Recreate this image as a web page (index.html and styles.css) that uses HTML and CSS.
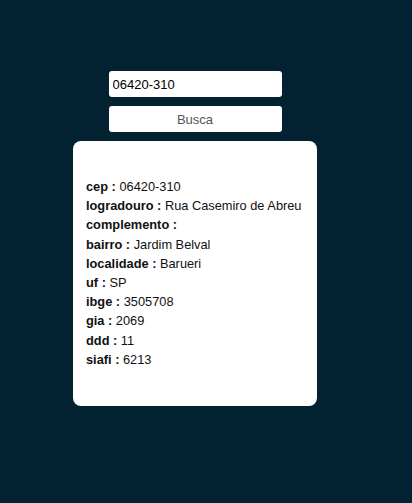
FILE: index.html
```html
<!DOCTYPE html>
<html lang="pt-BR">
<head>
<meta charset="utf-8">
<title>Busca CEP</title>
<link rel="stylesheet" href="styles.css">
</head>
<body>
<main class="app">
  <input class="cep-input" type="text" value="06420-310">
  <button class="busca-btn" type="button">Busca</button>
  <section class="card">
    <p class="row"><b>cep :</b> 06420-310</p>
    <p class="row"><b>logradouro :</b> Rua Casemiro de Abreu</p>
    <p class="row"><b>complemento :</b> </p>
    <p class="row"><b>bairro :</b> Jardim Belval</p>
    <p class="row"><b>localidade :</b> Barueri</p>
    <p class="row"><b>uf :</b> SP</p>
    <p class="row"><b>ibge :</b> 3505708</p>
    <p class="row"><b>gia :</b> 2069</p>
    <p class="row"><b>ddd :</b> 11</p>
    <p class="row"><b>siafi :</b> 6213</p>
  </section>
</main>
</body>
</html>
```
FILE: styles.css
```css
html, body {
  margin: 0;
  padding: 0;
  background: #022231;
  font-family: "Liberation Sans", Arial, sans-serif;
}

.app {
  width: 390px;
  display: flex;
  flex-direction: column;
  align-items: center;
  gap: 9px;
  padding-top: 71px;
}

.cep-input,
.busca-btn {
  box-sizing: border-box;
  width: 173px;
  height: 26px;
  border: none;
  border-radius: 3px;
  background: #fff;
  font-family: "Liberation Sans", Arial, sans-serif;
  font-size: 13px;
  margin: 0;
}

.cep-input {
  padding: 0 4px;
  color: #000;
  outline: none;
}

.busca-btn {
  color: #555;
  padding: 0;
}

.card {
  box-sizing: border-box;
  width: 244px;
  height: 265px;
  background: #fff;
  border-radius: 8px;
  padding: 36px 13px;
  color: #111;
  font-size: 12.8px;
}

.row {
  margin: 0;
  line-height: 19.2px;
  white-space: nowrap;
}

.row b {
  font-weight: bold;
}
```
